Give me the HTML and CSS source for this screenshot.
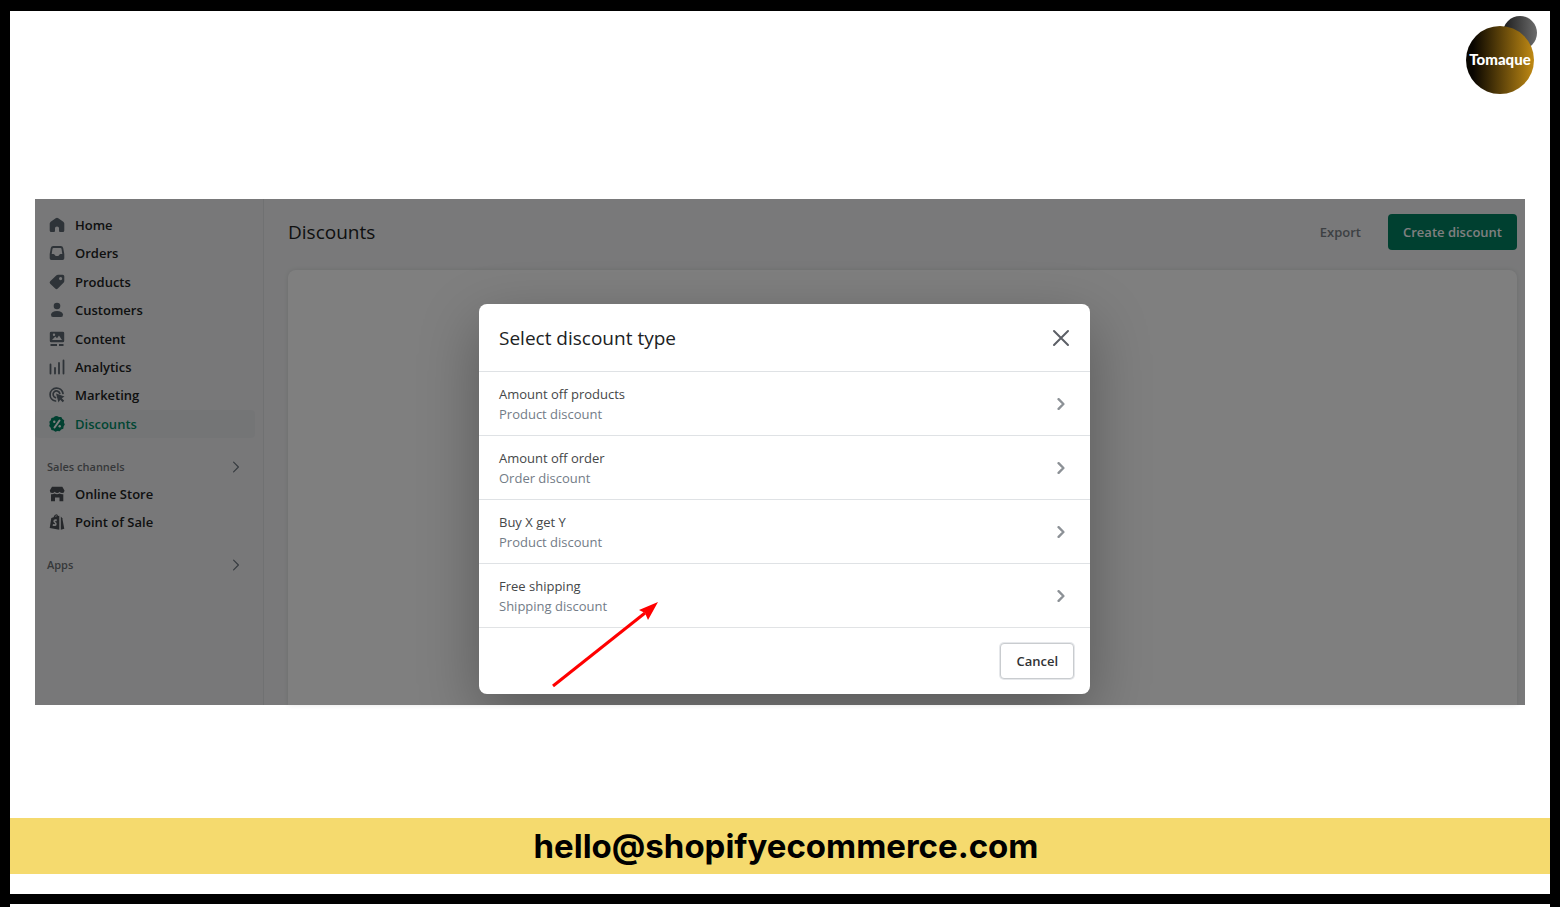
FILE: index.html
```html
<!DOCTYPE html>
<html lang="en">
<head>
<meta charset="utf-8">
<meta name="viewport" content="width=device-width, initial-scale=1">
<title>Discounts</title>
<link rel="stylesheet" href="styles.css">
</head>
<body>
<div class="slide">
  <header class="slide-top">
    <svg class="logo" viewBox="0 0 72 78" role="img" aria-label="Tomaque">
      <defs>
        <linearGradient id="gold"><stop offset="0.1" stop-color="#080500"/><stop offset="1" stop-color="#c08a14"/></linearGradient>
        <linearGradient id="grey"><stop offset="0" stop-color="#1c1c1c"/><stop offset="1" stop-color="#6c6c6c"/></linearGradient>
      </defs>
      <circle cx="54" cy="17" r="17" fill="url(#grey)"/>
      <circle cx="34" cy="44" r="34" fill="url(#gold)"/>
      <text class="logo-text" x="34" y="49" text-anchor="middle">Tomaque</text>
    </svg>
  </header>

  <div class="admin">
    <aside class="sidebar">
      <nav aria-label="Main">
        <ul class="nav-list nav-main">
          <li><a class="nav-link" href="#"><svg class="icon" viewBox="0 0 16 16"><path d="M6.7 1.2Q8 .2 9.300 1.200L14.300 4.700Q15.300 5.500 15.300 6.600V13.500Q15.300 15 13.800 15H11Q10 15 10 14V11Q10 9.500 8 9.500T6 11V14Q6 15 5 15H2.200Q.7 15 .7 13.500V6.600Q.7 5.500 1.700 4.700Z"/></svg>Home</a></li>
          <li><a class="nav-link" href="#"><svg class="icon" viewBox="0 0 16 16"><path fill-rule="evenodd" d="M4.200 1H11.800Q13.800 1 14.200 3L15.300 9V13.300Q15.300 15 13.600 15H2.400Q.7 15 .7 13.300V9L1.800 3Q2.200 1 4.200 1ZM4.500 3Q3.700 3 3.500 3.800L2.700 9H4.500Q5.300 9 5.600 9.700L6 10.300Q6.300 11 7 11H9Q9.700 11 10 10.300L10.400 9.700Q10.700 9 11.500 9H13.300L12.500 3.800Q12.300 3 11.500 3Z"/></svg>Orders</a></li>
          <li><a class="nav-link" href="#"><svg class="icon" viewBox="0 0 16 16"><path fill-rule="evenodd" d="M9 .8H13.700Q15.300.8 15.300 2.300V7Q15.300 8 14.500 8.800L8.800 14.600Q7.500 15.800 6.200 14.600L1.200 9.700Q0 8.400 1.200 7.200L7.200 1.500Q8 .8 9 .8ZM11.600 3A1.600 1.600 0 1 0 11.600 6.200A1.600 1.600 0 1 0 11.600 3Z"/></svg>Products</a></li>
          <li><a class="nav-link" href="#"><svg class="icon" viewBox="0 0 16 16"><circle cx="8" cy="4" r="3.300"/><path d="M2 12.500Q2.600 9 8 9T14 12.500Q14.200 15 12 15H4Q1.800 15 2 12.500Z"/></svg>Customers</a></li>
          <li><a class="nav-link" href="#"><svg class="icon" viewBox="0 0 16 16"><path fill-rule="evenodd" d="M2.200.7H13.800Q15.200.7 15.200 2.100V9.900Q15.200 11.300 13.800 11.300H2.200Q.8 11.300.8 9.900V2.100Q.8.7 2.200.7ZM3 9H13L10 4.500L8 7.200L6.300 5.600ZM5 2.500A1.200 1.200 0 1 0 5 4.900A1.200 1.200 0 1 0 5 2.500Z"/><path d="M1.500 13H8V15H1.500ZM10 13H14.500V15H10Z"/></svg>Content</a></li>
          <li><a class="nav-link" href="#"><svg class="icon icon-line" viewBox="0 0 16 16"><path stroke-width="1.800" d="M1.500 5.500V14.500M6 9V14.500M10 4V14.500M14.500 1.500V14.500"/></svg>Analytics</a></li>
          <li><a class="nav-link" href="#"><svg class="icon" viewBox="0 0 16 16"><path class="line" stroke-width="1.700" d="M14 6.500A6.500 6.500 0 1 0 6.500 14M10.800 6.500A3.400 3.400 0 1 0 6.500 10.600"/><path d="M7 6.500L15.500 9.500L12.800 11.200L15.200 13.700L13.700 15.200L11.200 12.800L9.500 15.500Z"/></svg>Marketing</a></li>
          <li><a class="nav-link is-active" href="#" aria-current="page"><svg class="icon" viewBox="0 0 16 16"><path d="M8 0L10 1L12.300.9L13.400 2.900L15.200 4.300L14.900 6.500L15.800 8.600L14.600 10.500L14.300 12.700L12.200 13.600L10.700 15.300L8.500 15L6.400 15.700L4.600 14.400L2.400 13.900L1.700 11.800L.2 10.100L.8 8L.3 5.800L1.800 4.200L2.400 2.100L4.500 1.500L6 .2Z"/><path class="cut" d="M5.500 11.500L10.500 4.500"/><circle class="dot" cx="5.300" cy="5.700" r="1.200"/><circle class="dot" cx="10.700" cy="10.300" r="1.200"/></svg>Discounts</a></li>
        </ul>
        <a class="nav-heading" href="#">Sales channels<svg class="chevron" viewBox="0 0 10 10"><path d="M3 1L7 5L3 9"/></svg></a>
        <ul class="nav-list">
          <li><a class="nav-link" href="#"><svg class="icon icon-dark" viewBox="0 0 16 16"><path d="M3 .8H13.300L15.500 4.500Q15.500 7 13.200 7Q11.500 7 10.600 5.800Q9.600 7 8.200 7T5.700 5.800Q4.800 7 3.100 7Q.8 7 .8 4.500Z"/><path d="M2 8.200Q4.200 8.500 5.500 7.500Q8 9 10.700 7.500Q12.200 8.500 14.300 8.200V15.200H10.500V11.500H6V15.200H2Z"/></svg>Online Store</a></li>
          <li><a class="nav-link" href="#"><svg class="icon icon-dark" viewBox="0 0 16 16"><path fill-rule="evenodd" d="M2.300 4L4.500 3.300Q5.500.3 7.500.2Q8.700.3 9 2L10.300 1.800V15.800L.7 14ZM8 5.500Q4.500 4.700 4.300 7.300Q4.300 8.500 5.800 9.300Q6.500 9.900 5.700 10.200L4 9.900L3.600 11.700Q7.600 13 7.700 9.900Q7.700 8.700 6.200 7.700Q5.900 6.800 7.500 7.200ZM7.800 2.300L7.500 1.200Q6.500 1.500 6 2.800Z"/><path d="M11.800 2.500L13.300 4.300L15.300 14.800L11.800 15.700Z"/></svg>Point of Sale</a></li>
        </ul>
        <a class="nav-heading" href="#">Apps<svg class="chevron" viewBox="0 0 10 10"><path d="M3 1L7 5L3 9"/></svg></a>
      </nav>
    </aside>

    <main class="content">
      <div class="page-head">
        <h1>Discounts</h1>
        <button class="btn-plain" type="button">Export</button>
        <button class="btn-primary" type="button">Create discount</button>
      </div>
      <div class="card"></div>
    </main>

    <div class="backdrop">
      <section class="modal" role="dialog" aria-labelledby="modal-title">
        <div class="modal-head">
          <h2 id="modal-title">Select discount type</h2>
          <button class="close" type="button" aria-label="Close"><svg viewBox="0 0 18 18"><path d="M2 2L16 16M16 2L2 16"/></svg></button>
        </div>
        <button class="option" type="button"><span class="option-text">Amount off products<span class="option-kind">Product discount</span></span><svg class="chevron chevron-bold" viewBox="0 0 10 10"><path d="M3 1L7 5L3 9"/></svg></button>
        <button class="option" type="button"><span class="option-text">Amount off order<span class="option-kind">Order discount</span></span><svg class="chevron chevron-bold" viewBox="0 0 10 10"><path d="M3 1L7 5L3 9"/></svg></button>
        <button class="option" type="button"><span class="option-text">Buy X get Y<span class="option-kind">Product discount</span></span><svg class="chevron chevron-bold" viewBox="0 0 10 10"><path d="M3 1L7 5L3 9"/></svg></button>
        <button class="option" type="button"><span class="option-text">Free shipping<span class="option-kind">Shipping discount</span></span><svg class="chevron chevron-bold" viewBox="0 0 10 10"><path d="M3 1L7 5L3 9"/></svg></button>
        <div class="modal-foot">
          <button class="btn-cancel" type="button">Cancel</button>
        </div>
        <svg class="arrow" viewBox="0 0 108 86" aria-hidden="true"><path class="shaft" d="M2 84L94 11"/><path class="tip" d="M107 0L97 18L94 11L88 8Z"/></svg>
      </section>
    </div>
  </div>

  <footer class="banner"><a href="mailto:hello@shopifyecommerce.com">hello@shopifyecommerce.com</a></footer>
  <div class="rule"></div>
</div>
</body>
</html>
```
FILE: styles.css
```css
* { box-sizing: border-box; }

body {
  margin: 0;
  background: #fff;
  font-family: "Open Sans", "Noto Sans", sans-serif;
  font-size: 13px;
  line-height: 20px;
  color: #202223;
}

button { font: inherit; cursor: pointer; }
a { color: inherit; text-decoration: none; }
ul { list-style: none; margin: 0; padding: 0; }
h1, h2 { margin: 0; font-weight: 500; font-size: 19px; line-height: 28px; }

.slide {
  min-height: 100vh;
  border: solid #000;
  border-width: 11px 10px 0;
}

.slide-top {
  display: flex;
  justify-content: flex-end;
  height: 188px;
  padding: 5px 12px;
}
.logo { width: 72px; height: 78px; }
.logo-text { fill: #fff; font-family: Lato, sans-serif; font-weight: 900; font-size: 15px; }

/* Admin */
.admin {
  position: relative;
  display: flex;
  margin: 0 25px;
  height: 506px;
  background: #f2f3f4;
}
.sidebar {
  flex: none;
  width: 229px;
  padding: 12px 8px 0 0;
  border-right: 1px solid #e1e3e5;
  background: #f1f1f2;
}
.nav-main {
  display: grid;
  grid-template-rows: repeat(8, 1fr);
  height: 227px;
}
.nav-link {
  display: flex;
  align-items: center;
  gap: 10px;
  height: 28px;
  padding-left: 14px;
  border-radius: 4px;
  font-weight: 600;
}
.nav-link.is-active { background: #e9eaed; color: #008c67; }
.icon { width: 16px; height: 16px; fill: #5c6670; }
.icon-dark { fill: #4a4f55; }
.icon-line, .line { fill: none; stroke: #5c6670; stroke-linecap: round; }
.is-active .icon { fill: #008060; }
.cut { stroke: #fff; stroke-width: 2; stroke-linecap: round; }
.is-active .dot { fill: #fff; }
.nav-heading {
  display: flex;
  align-items: center;
  justify-content: space-between;
  height: 26px;
  margin-top: 16px;
  padding: 0 13px 0 12px;
  font-size: 11px;
  font-weight: 600;
  color: #6d7175;
}
.chevron { width: 12px; height: 12px; fill: none; stroke: #6d7680; stroke-width: 1; stroke-linecap: round; stroke-linejoin: round; }
.chevron-bold { stroke: #8c9196; stroke-width: 2; }

.content {
  flex: 1;
  display: flex;
  flex-direction: column;
  gap: 20px;
  padding: 15px 8px 0 24px;
}
.page-head { display: flex; align-items: center; height: 36px; }
.page-head h1 { flex: 1; }
.btn-plain {
  margin-right: 15px;
  padding: 0 12px;
  border: 0;
  background: none;
  color: #7b8187;
  font-weight: 600;
}
.btn-primary {
  height: 36px;
  padding: 0 15px;
  border: 0;
  border-radius: 4px;
  background: #008060;
  color: #fff;
  font-weight: 600;
}
.card {
  flex: 1;
  border-radius: 8px 8px 0 0;
  background: #fff;
  box-shadow: 0 0 5px rgba(23, 24, 24, .1);
}

/* Dialog */
.backdrop {
  position: absolute;
  inset: 0;
  display: flex;
  align-items: flex-start;
  justify-content: center;
  padding: 105px 0 0 9px;
  background: rgba(0, 0, 0, .5);
  overflow: hidden;
}
.modal {
  position: relative;
  width: 100%;
  max-width: 611px;
  border-radius: 8px;
  background: #fff;
  box-shadow: 0 20px 60px rgba(0, 0, 0, .3);
}
.modal-head {
  display: flex;
  align-items: center;
  justify-content: space-between;
  height: 67px;
  padding: 0 20px;
}
.close { width: 18px; height: 18px; padding: 0; border: 0; background: none; }
.close svg { display: block; fill: none; stroke: #5c5f66; stroke-width: 2; stroke-linecap: round; }
.option {
  display: flex;
  align-items: center;
  justify-content: space-between;
  width: 100%;
  height: 64px;
  padding: 0 23px 0 20px;
  border: 0;
  border-top: 1px solid #dfe2e5;
  background: none;
  color: #454749;
  text-align: left;
}
.option-kind { display: block; color: #737c87; }
.modal-foot {
  display: flex;
  justify-content: flex-end;
  padding: 15px 16px;
  border-top: 1px solid #e1e3e5;
}
.btn-cancel {
  height: 36px;
  padding: 0 15px;
  border: 1px solid #c9cccf;
  border-radius: 4px;
  background: #fff;
  box-shadow: 0 0 0 1px #e6e8eb;
  color: #303234;
  font-weight: 600;
}
.arrow { position: absolute; left: 72px; top: 298px; width: 108px; height: 86px; }
.shaft { fill: none; stroke: #f00; stroke-width: 3; }
.tip { fill: #f00; }

.banner {
  margin: 113px 0 20px;
  padding-left: 12px;
  background: #f5da6e;
  color: #000;
  font-family: Inter, sans-serif;
  font-size: 33px;
  font-weight: 700;
  line-height: 56px;
  text-align: center;
}
.rule { height: 10px; background: #000; }
```
